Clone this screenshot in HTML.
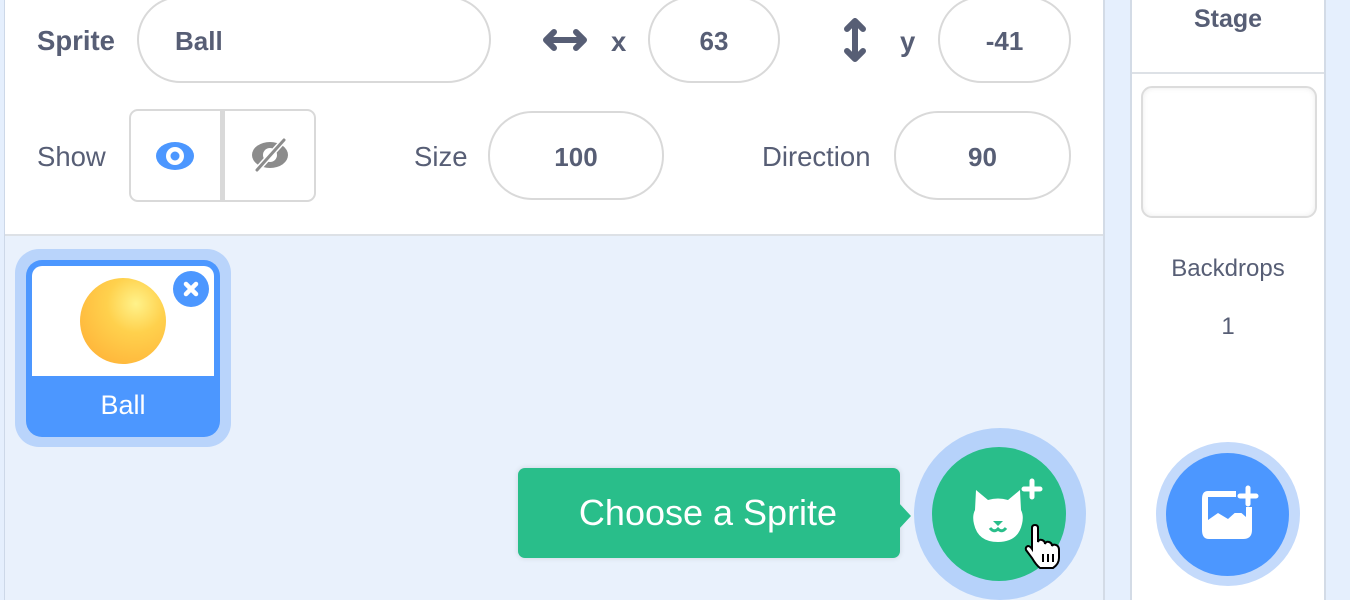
<!DOCTYPE html>
<html><head><meta charset="utf-8"><style>
*{margin:0;padding:0;box-sizing:border-box}
body{width:1350px;height:600px;overflow:hidden;background:#e5effd;font-family:"Liberation Sans",Helvetica,sans-serif;color:#575e75;position:relative}
.a{position:absolute}
.pill{position:absolute;border:2px solid #d9d9d9;border-radius:44px;background:#fff;font-weight:bold;font-size:26px;display:flex;align-items:center;color:#575e75;padding-top:3px}
.lbl{position:absolute;font-size:27.5px}
</style></head><body>
<div class="a" style="left:4px;top:0;width:1101px;height:600px;background:#e9f1fc;border-left:1px solid #cdd8e8;border-right:2px solid #d3dbe6"></div>
<div class="a" style="left:5px;top:0;width:1098px;height:236px;background:#fff;border-bottom:2px solid #dde1e6"></div>
<div class="lbl" style="left:37px;top:25px;font-weight:bold">Sprite</div>
<div class="pill" style="left:137px;top:-4px;width:354px;height:87px;padding-left:36px">Ball</div>
<svg class="a" style="left:542px;top:28px" width="46" height="24" viewBox="0 0 46 24"><path d="M4 12H42M12 4L4 12L12 20M34 4L42 12L34 20" stroke="#575e75" stroke-width="6" fill="none" stroke-linecap="round" stroke-linejoin="round"/></svg>
<div class="lbl" style="left:611px;top:26px;font-weight:bold">x</div>
<div class="pill" style="left:648px;top:-4px;width:132px;height:87px;justify-content:center">63</div>
<svg class="a" style="left:843px;top:17px" width="24" height="46" viewBox="0 0 24 46"><path d="M12 4V42M4 12L12 4L20 12M4 34L12 42L20 34" stroke="#575e75" stroke-width="6" fill="none" stroke-linecap="round" stroke-linejoin="round"/></svg>
<div class="lbl" style="left:900px;top:26px;font-weight:bold">y</div>
<div class="pill" style="left:938px;top:-4px;width:133px;height:87px;justify-content:center">-41</div>
<div class="lbl" style="left:37px;top:141px">Show</div>
<div class="a" style="left:129px;top:109px;width:187px;height:93px;border:2px solid #d9d9d9;border-radius:9px;background:#fff"></div>
<div class="a" style="left:220px;top:110px;width:5px;height:91px;background:#d9d9d9"></div>
<svg class="a" style="left:154px;top:139px" width="42" height="34" viewBox="0 0 42 34"><ellipse cx="21" cy="17" rx="19" ry="14" fill="#4c97ff"/><circle cx="21" cy="17" r="9" fill="#fff"/><circle cx="21" cy="17" r="4.5" fill="#4c97ff"/></svg>
<svg class="a" style="left:248px;top:136px" width="44" height="38" viewBox="0 0 44 38"><ellipse cx="22" cy="19" rx="18" ry="13" fill="#8c8c8c"/><circle cx="22" cy="19" r="7" fill="#fff"/><path d="M9 34L36 4" stroke="#fff" stroke-width="6"/><path d="M9 34L36 4" stroke="#8c8c8c" stroke-width="3" stroke-linecap="round"/></svg>
<div class="lbl" style="left:414px;top:141px">Size</div>
<div class="pill" style="left:488px;top:111px;width:176px;height:89px;justify-content:center">100</div>
<div class="lbl" style="left:762px;top:141px">Direction</div>
<div class="pill" style="left:894px;top:111px;width:177px;height:89px;justify-content:center">90</div>

<div class="a" style="left:15px;top:249px;width:216px;height:198px;border-radius:24px;background:#b9d4fb"></div>
<div class="a" style="left:26px;top:260px;width:194px;height:177px;border-radius:16px;background:#4c97ff"></div>
<div class="a" style="left:32px;top:266px;width:182px;height:110px;border-radius:10px 10px 0 0;background:#fff"></div>
<div class="a" style="left:80px;top:278px;width:86px;height:86px;border-radius:50%;background:radial-gradient(circle at 65% 30%,#fff28a 0%,#ffd14d 35%,#ffab33 100%)"></div>
<div class="a" style="left:26px;top:390px;width:194px;text-align:center;color:#fff;font-size:27px">Ball</div>
<div class="a" style="left:173px;top:271px;width:36px;height:36px;border-radius:50%;background:#4c97ff"></div>
<svg class="a" style="left:181px;top:279px" width="20" height="20" viewBox="0 0 20 20"><path d="M5 5L15 15M15 5L5 15" stroke="#fff" stroke-width="4.5" stroke-linecap="round"/></svg>

<div class="a" style="left:518px;top:468px;width:382px;height:90px;border-radius:7px;background:#29be8a;box-shadow:0 0 6px rgba(0,0,0,.12);color:#fff;font-size:36px;display:flex;align-items:center;justify-content:center;padding-right:2px">Choose a Sprite</div>
<svg class="a" style="left:898px;top:502px" width="14" height="28"><path d="M0 0L13 14L0 28Z" fill="#29be8a"/></svg>
<div class="a" style="left:914px;top:428px;width:172px;height:172px;border-radius:50%;background:#b6d2fa"></div>
<div class="a" style="left:932px;top:447px;width:134px;height:134px;border-radius:50%;background:#29be8a"></div>
<svg class="a" style="left:970px;top:478px" width="80" height="80" viewBox="0 0 80 80"><path d="M5 32L6 12L18 22Q28 19 38 22L50 12L51 32Q54 38 52 46Q48 64 28 64Q8 64 4 46Q2 38 5 32Z" fill="#fff"/><path d="M23 43L33 43L28 48Z" fill="#29be8a"/><path d="M20 50Q24 55 28 51Q32 55 36 50" stroke="#29be8a" stroke-width="3" fill="none"/><path d="M62 3V19M54 11H70" stroke="#fff" stroke-width="5" stroke-linecap="round"/></svg>
<svg class="a" style="left:1023px;top:524px" width="40" height="46" viewBox="0 0 40 46"><path d="M9 4Q9 1 12 1Q15 1 15 4V18Q16 15 19 16Q22 17 22 20Q23 17 26 18Q29 19 29 22Q30 20 33 21Q36 22 36 26V34Q36 40 30 44H17Q13 41 9 34L3 26Q2 23 5 22Q7 22 9 25Z" fill="#fff" stroke="#000" stroke-width="2"/><path d="M20 30V38M25 30V38M30 30V38" stroke="#000" stroke-width="2"/></svg>

<div class="a" style="left:1130px;top:0;width:196px;height:600px;background:#fff;border-left:2px solid #d3dbe6;border-right:2px solid #d3dbe6"></div>
<div class="a" style="left:1132px;top:72px;width:192px;height:2px;background:#dde1e6"></div>
<div class="a" style="left:1130px;top:5px;width:196px;text-align:center;font-weight:bold;font-size:25px">Stage</div>
<div class="a" style="left:1141px;top:86px;width:176px;height:132px;border:2px solid #dcdcdc;border-radius:11px;background:#fff;box-shadow:inset 0 0 6px rgba(0,0,0,.08)"></div>
<div class="a" style="left:1130px;top:255px;width:196px;text-align:center;font-size:24px">Backdrops</div>
<div class="a" style="left:1130px;top:313px;width:196px;text-align:center;font-size:24px">1</div>
<div class="a" style="left:1156px;top:442px;width:144px;height:144px;border-radius:50%;background:#c4dafb"></div>
<div class="a" style="left:1166px;top:453px;width:123px;height:123px;border-radius:50%;background:#4c97ff"></div>
<svg class="a" style="left:1198px;top:485px" width="66" height="56" viewBox="0 0 66 56"><path d="M10 6H38V12H10V28H48V22H54V45Q54 54 45 54H11Q4 54 4 45V14Q4 6 10 6Z" fill="#fff"/><path d="M10 12H48V32L40 25L30 34L20 28L10 35Z" fill="#4c97ff"/><path d="M50 3V19M42 11H58" stroke="#fff" stroke-width="5" stroke-linecap="round"/></svg>
</body></html>
